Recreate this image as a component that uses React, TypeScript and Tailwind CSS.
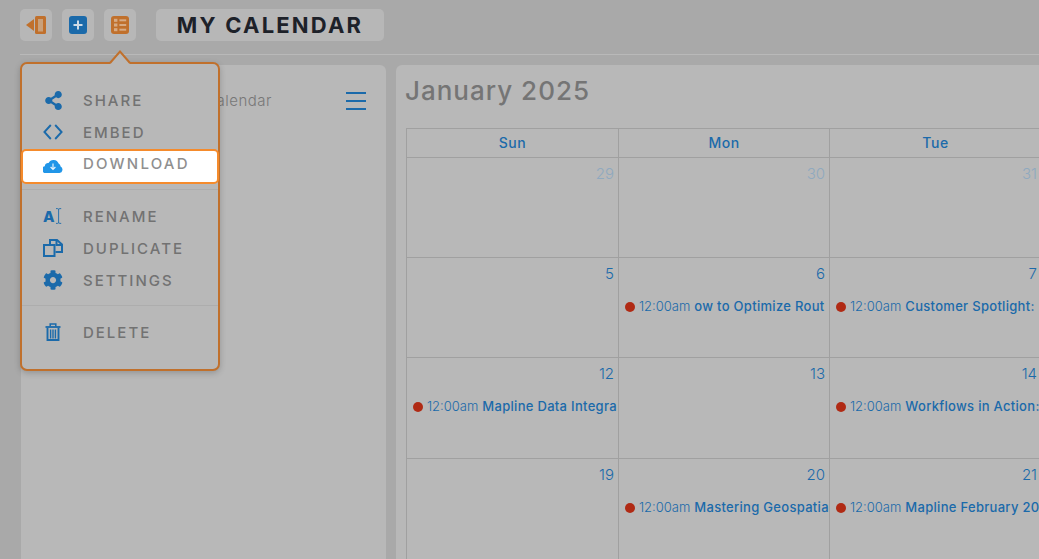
import React from "react";
import { FaShareAlt, FaCog } from "react-icons/fa";

const font = "[font-family:Inter,'Open_Sans',sans-serif]";
const blue = "text-[#1b6aaa]";

function Collapse() {
  return (
    <svg width="20" height="18" viewBox="0 0 20 18">
      <path d="M0 9 L8 3 V15 Z" fill="#c0702c" />
      <rect x="9" y="0" width="11" height="18" rx="1.5" fill="#c0702c" />
      <rect x="12" y="3" width="5" height="12.5" fill="#c9a07a" />
    </svg>
  );
}
function PlusBox() {
  return (
    <svg width="18" height="18" viewBox="0 0 18 18">
      <rect width="18" height="18" rx="3" fill="#1b6aaa" />
      <path d="M9 4.5V13.5M4.5 9H13.5" stroke="#cfdbe6" strokeWidth="2" />
    </svg>
  );
}
function ListBox() {
  return (
    <svg width="18" height="18" viewBox="0 0 18 18">
      <rect width="18" height="18" rx="3" fill="#c0702c" />
      <g fill="#d6ab85">
        <rect x="3" y="2.8" width="3.4" height="3" />
        <rect x="3" y="7.5" width="3.4" height="3" />
        <rect x="3" y="12.2" width="3.4" height="3" />
        <rect x="8.4" y="3.3" width="6.8" height="2" />
        <rect x="8.4" y="8" width="6.8" height="2" />
        <rect x="8.4" y="12.7" width="6.8" height="2" />
      </g>
    </svg>
  );
}
function CodeIcon() {
  return (
    <svg width="20" height="16" viewBox="0 0 20 16" fill="none" stroke="#1b6aaa" strokeWidth="1.9">
      <path d="M7.8 1 L1.4 8 L7.8 15M12.2 1 L18.6 8 L12.2 15" />
    </svg>
  );
}
function CloudIcon() {
  return (
    <svg width="20" height="15" viewBox="0 0 20 15" className="mt-[3px]">
      <path d="M3.5 15 A3.5 3.5 0 0 1 1.8 8.2 A3.2 3.2 0 0 1 5.6 5 A5.4 5.4 0 0 1 15.6 5.6 A3.6 3.6 0 0 1 17.6 8.6 A3.4 3.4 0 0 1 16.5 15 Z" fill="#2196e8" />
      <path d="M10 5.5V11M7.6 9L10 11.4L12.4 9" fill="none" stroke="#e8f3fc" strokeWidth="1.2" />
    </svg>
  );
}
function RenameIcon() {
  return (
    <svg width="20" height="16" viewBox="0 0 20 16">
      <text x="0" y="13.5" fontSize="15" fontWeight="800" fill="#1b6aaa" fontFamily="Inter, sans-serif">A</text>
      <path d="M13 .6H14.5C15.2.6 15.6 1 15.6 1.6V14.4C15.6 15 15.2 15.4 14.5 15.4H13M18.2.6H16.7C16 .6 15.6 1 15.6 1.6M15.6 14.4C15.6 15 16 15.4 16.7 15.4H18.2" fill="none" stroke="#1b6aaa" strokeWidth=".9" />
    </svg>
  );
}
function CopyIcon() {
  return (
    <svg width="20" height="18" viewBox="0 0 20 18" fill="none" stroke="#1b6aaa" strokeWidth="2">
      <path d="M7 5 V1 H14 L19 5.5 V13 H12.5" />
      <path d="M1 6 H11.5 V17 H1 Z" />
      <path d="M13.5 1 V6 H19" />
    </svg>
  );
}
function TrashIcon() {
  return (
    <svg width="16" height="18" viewBox="0 0 16 18" fill="none" stroke="#1b6aaa">
      <path d="M0.5 4H15.5" strokeWidth="1.8" />
      <path d="M5.2 3.5V1H10.8V3.5" strokeWidth="1.5" />
      <path d="M2.5 5V17H13.5V5" strokeWidth="1.9" />
      <path d="M5.6 6.5V15.5M8 6.5V15.5M10.4 6.5V15.5" strokeWidth="1.4" />
    </svg>
  );
}

function MenuRow({ icon, label, active }: { icon: React.ReactNode; label: string; active?: boolean }) {
  return (
    <div
      className={
        active
          ? "flex items-center h-[35px] mt-px -mx-px pl-[20px] pb-[6px] bg-white border-2 border-[#f58b2c] rounded-[5px]"
          : "flex items-center h-8 pl-[21px]"
      }
    >
      <span className="w-[20px] flex justify-center">{icon}</span>
      <span
        className={
          "ml-[20px] text-[15px] font-medium leading-none " +
          (active ? "tracking-[2.2px] text-[#8f8f8f]" : "tracking-[2px] text-[#727272]")
        }
      >
        {label}
      </span>
    </div>
  );
}

type Cell = { d: number; muted?: boolean; ev?: string };

const rows: Cell[][] = [
  [{ d: 29, muted: true }, { d: 30, muted: true }, { d: 31, muted: true }],
  [{ d: 5 }, { d: 6, ev: "ow to Optimize Rout" }, { d: 7, ev: "Customer Spotlight:" }],
  [{ d: 12, ev: "Mapline Data Integra" }, { d: 13 }, { d: 14, ev: "Workflows in Action:" }],
  [{ d: 19 }, { d: 20, ev: "Mastering Geospatia" }, { d: 21, ev: "Mapline February 20" }],
];
const heights = ["h-[100px]", "h-[100px]", "h-[101px]", "h-[101px]"];
const widths = ["w-[213px] border-l", "w-[211px]", "w-[212px]"];

function DayCell({ c, col, h }: { c: Cell; col: number; h: string }) {
  return (
    <div className={"shrink-0 border-b border-r border-[#a0a0a0] overflow-hidden " + h + " " + widths[col]}>
      <div className={"text-right pr-[4px] pt-[6px] text-[15px] leading-5 font-light " + (c.muted ? "text-[#8fa9bf]" : blue)}>{c.d}</div>
      {c.ev && (
        <div className="flex items-center mt-[14px] pl-[6px] h-[18px] whitespace-nowrap text-[13px] overflow-hidden">
          <span className="w-[10px] h-[10px] rounded-full bg-[#b02a14] shrink-0" />
          <span className={"ml-[4px] font-light " + blue}>12:00am</span>
          <span className={"ml-[4px] font-medium tracking-[.3px] " + blue}>{c.ev}</span>
        </div>
      )}
    </div>
  );
}

export default function App() {
  return (
    <div className={"relative w-[1039px] h-[559px] overflow-hidden bg-[#a9a9a9] " + font}>
      <header className="ml-5 h-[55px] border-b border-[#b9b9b9] flex items-start pt-[9px]">
        <div className="w-8 h-8 rounded-[5px] bg-[#b7b7b7] flex items-center justify-center"><Collapse /></div>
        <div className="w-8 h-8 ml-[10px] rounded-[5px] bg-[#b7b7b7] flex items-center justify-center"><PlusBox /></div>
        <div className="w-8 h-8 ml-[10px] rounded-[5px] bg-[#b7b7b7] flex items-center justify-center"><ListBox /></div>
        <div className="ml-5 w-[228px] h-8 rounded-[5px] bg-[#b7b7b7] flex items-center justify-center text-[22px] font-bold tracking-[2.2px] text-[#1d2129]">
          MY CALENDAR
        </div>
      </header>

      <main className="flex pl-[21px] pt-[10px] gap-[10px] h-[504px]">
        <aside className="w-[365px] shrink-0 h-[520px] rounded-[6px] bg-[#b8b8b8] flex items-start justify-end pt-[25px] pr-5">
          <span className="text-[15px] text-[#777] font-light tracking-[.5px] mr-[74px]">Calendar</span>
          <span className="flex flex-col gap-[6px] w-5 mt-[2px]">
            <i className="h-[2px] bg-[#1b6aaa]" />
            <i className="h-[2px] bg-[#1b6aaa]" />
            <i className="h-[2px] bg-[#1b6aaa]" />
          </span>
        </aside>
        <section className="w-[700px] shrink-0 h-[520px] rounded-[6px] bg-[#b8b8b8] pl-[10px]">
          <h1 className="text-[26px] leading-[32px] pt-[10px] -ml-px font-medium tracking-[1px] text-[#757575]">January 2025</h1>
          <div className="mt-[21px]">
            <div className="flex h-[30px] border-t border-[#a0a0a0]">
              {["Sun", "Mon", "Tue"].map((d, i) => (
                <div key={d} className={"shrink-0 border-b border-r border-[#a0a0a0] flex items-center justify-center pb-[2px] text-[14px] font-medium tracking-[.5px] " + blue + " " + widths[i]}>
                  {d}
                </div>
              ))}
            </div>
            {rows.map((r, i) => (
              <div key={i} className="flex">
                {r.map((c, j) => (
                  <DayCell key={j} c={c} col={j} h={heights[i]} />
                ))}
              </div>
            ))}
          </div>
        </section>
      </main>

      <div className="absolute left-5 top-[62px] w-[200px] h-[309px] rounded-[7px] border-2 border-[#c0702c] bg-[#b8b8b8] shadow-[0_2px_6px_rgba(0,0,0,0.2)] pt-[20px]">
        <svg className="absolute left-[86px] -top-[15px]" width="24" height="15" viewBox="0 0 24 15">
          <polygon points="2,15 12,3 22,15" fill="#b8b8b8" />
          <polyline points="2,14 12,2.5 22,14" fill="none" stroke="#c0702c" strokeWidth="2" />
        </svg>
        <MenuRow icon={<FaShareAlt className="text-[#1b6aaa] w-[19px] h-[19px]" />} label="SHARE" />
        <MenuRow icon={<CodeIcon />} label="EMBED" />
        <MenuRow icon={<CloudIcon />} label="DOWNLOAD" active />
        <div className="h-[6px] border-b border-[#adadad]" />
        <div className="h-[10px]" />
        <MenuRow icon={<RenameIcon />} label="RENAME" />
        <MenuRow icon={<CopyIcon />} label="DUPLICATE" />
        <MenuRow icon={<FaCog className="text-[#1b6aaa] w-[20px] h-[20px]" />} label="SETTINGS" />
        <div className="h-[10px] border-b border-[#adadad]" />
        <div className="h-[10px]" />
        <MenuRow icon={<TrashIcon />} label="DELETE" />
      </div>
    </div>
  );
}
